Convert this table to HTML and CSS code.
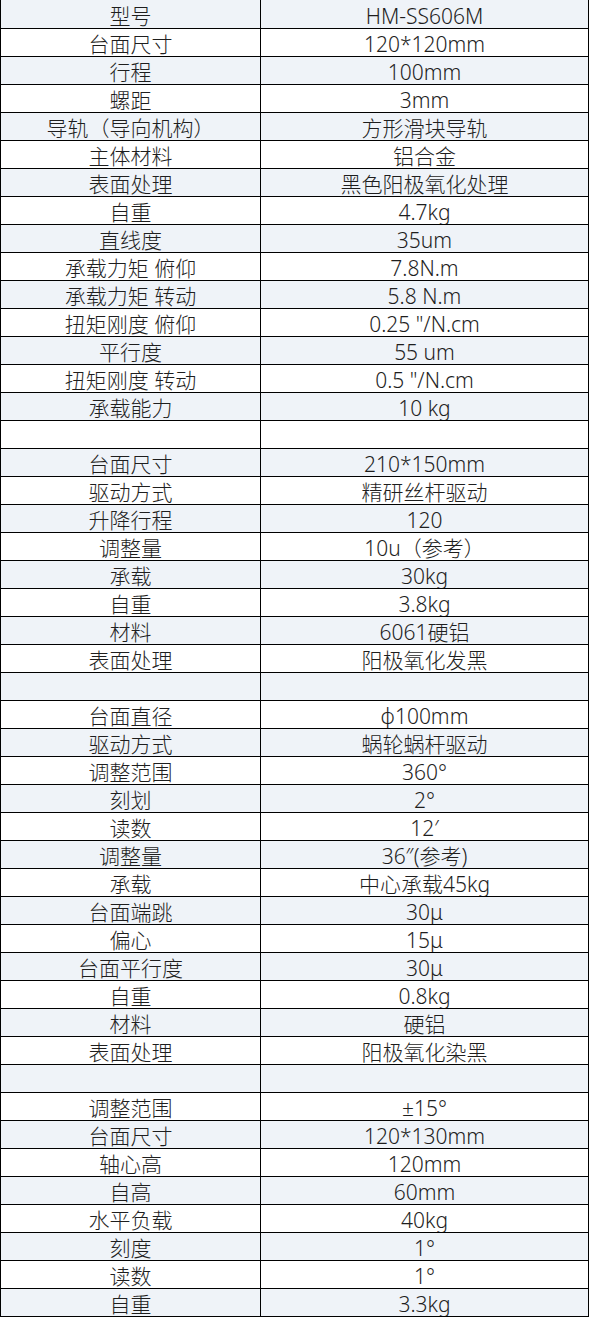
FILE: index.html
```html
<!DOCTYPE html>
<html lang="zh-CN">
<head>
<meta charset="utf-8">
<title>参数表</title>
<link rel="stylesheet" href="styles.css">
</head>
<body>
<table class="spec">
<tbody>
<tr><td>型号</td><td>HM-SS606M</td></tr>
<tr><td>台面尺寸</td><td>120*120mm</td></tr>
<tr><td>行程</td><td>100mm</td></tr>
<tr><td>螺距</td><td>3mm</td></tr>
<tr><td>导轨（导向机构）</td><td>方形滑块导轨</td></tr>
<tr><td>主体材料</td><td>铝合金</td></tr>
<tr><td>表面处理</td><td>黑色阳极氧化处理</td></tr>
<tr><td>自重</td><td>4.7kg</td></tr>
<tr><td>直线度</td><td>35um</td></tr>
<tr><td>承载力矩 俯仰</td><td>7.8N.m</td></tr>
<tr><td>承载力矩 转动</td><td>5.8 N.m</td></tr>
<tr><td>扭矩刚度 俯仰</td><td>0.25 "/N.cm</td></tr>
<tr><td>平行度</td><td>55 um</td></tr>
<tr><td>扭矩刚度 转动</td><td>0.5 "/N.cm</td></tr>
<tr><td>承载能力</td><td>10 kg</td></tr>
<tr><td></td><td></td></tr>
<tr><td>台面尺寸</td><td>210*150mm</td></tr>
<tr><td>驱动方式</td><td>精研丝杆驱动</td></tr>
<tr><td>升降行程</td><td>120</td></tr>
<tr><td>调整量</td><td>10u（参考）</td></tr>
<tr><td>承载</td><td>30kg</td></tr>
<tr><td>自重</td><td>3.8kg</td></tr>
<tr><td>材料</td><td>6061硬铝</td></tr>
<tr><td>表面处理</td><td>阳极氧化发黑</td></tr>
<tr><td></td><td></td></tr>
<tr><td>台面直径</td><td>φ100mm</td></tr>
<tr><td>驱动方式</td><td>蜗轮蜗杆驱动</td></tr>
<tr><td>调整范围</td><td>360°</td></tr>
<tr><td>刻划</td><td>2°</td></tr>
<tr><td>读数</td><td>12′</td></tr>
<tr><td>调整量</td><td>36″(参考)</td></tr>
<tr><td>承载</td><td>中心承载45kg</td></tr>
<tr><td>台面端跳</td><td>30μ</td></tr>
<tr><td>偏心</td><td>15μ</td></tr>
<tr><td>台面平行度</td><td>30μ</td></tr>
<tr><td>自重</td><td>0.8kg</td></tr>
<tr><td>材料</td><td>硬铝</td></tr>
<tr><td>表面处理</td><td>阳极氧化染黑</td></tr>
<tr><td></td><td></td></tr>
<tr><td>调整范围</td><td>±15°</td></tr>
<tr><td>台面尺寸</td><td>120*130mm</td></tr>
<tr><td>轴心高</td><td>120mm</td></tr>
<tr><td>自高</td><td>60mm</td></tr>
<tr><td>水平负载</td><td>40kg</td></tr>
<tr><td>刻度</td><td>1°</td></tr>
<tr><td>读数</td><td>1°</td></tr>
<tr><td>自重</td><td>3.3kg</td></tr>
</tbody>
</table>
</body>
</html>
```

FILE: styles.css
```css
html, body {
  margin: 0;
  padding: 0;
  background: #ffffff;
}
.spec {
  border-collapse: collapse;
  width: 589px;
  table-layout: fixed;
  font-family: "Noto Sans", "Noto Sans CJK SC", sans-serif;
  font-size: 21px;
  font-weight: 300;
  color: #1e1e1e;
}
.spec td {
  border: 1px solid #000;
  height: 24px;
  padding: 3px 0 0 0;
  text-align: center;
  vertical-align: middle;
  line-height: 24px;
  white-space: nowrap;
  overflow: hidden;
}
.spec tr:first-child td {
  border-top: none;
  height: 25px;
}
.spec td:first-child {
  width: 259px;
}
.spec tr:nth-child(odd) td {
  background: #eff3f8;
}
```
